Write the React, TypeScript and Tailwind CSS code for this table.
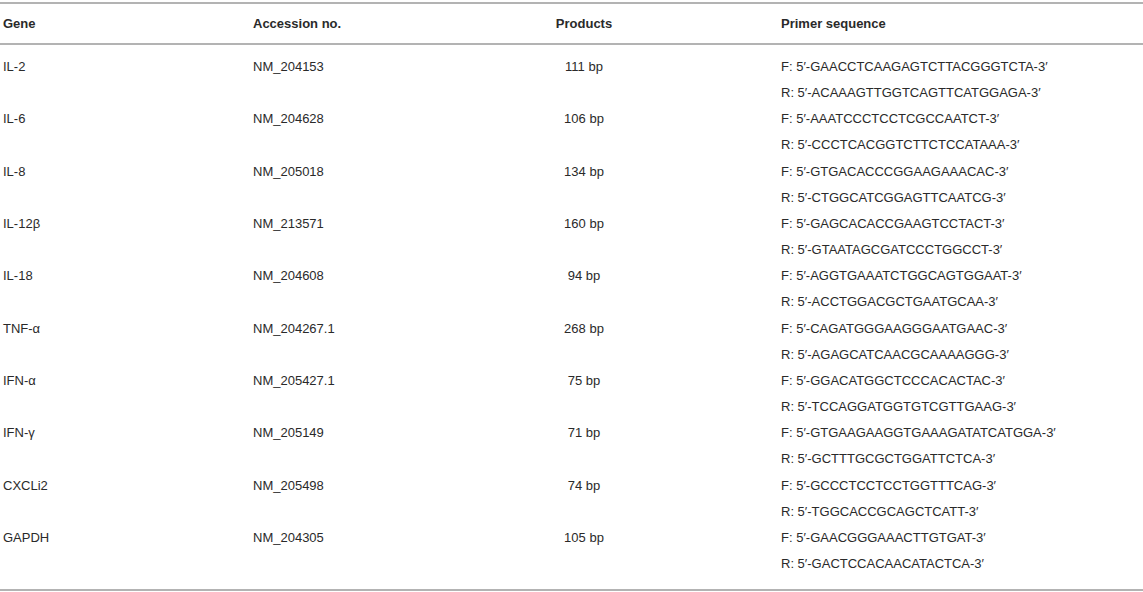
import React from "react";

type Row = {
  gene: string;
  acc: string;
  prod: string;
  f: string;
  r: string;
};

const rows: Row[] = [
  { gene: "IL-2", acc: "NM_204153", prod: "111 bp", f: "GAACCTCAAGAGTCTTACGGGTCTA", r: "ACAAAGTTGGTCAGTTCATGGAGA" },
  { gene: "IL-6", acc: "NM_204628", prod: "106 bp", f: "AAATCCCTCCTCGCCAATCT", r: "CCCTCACGGTCTTCTCCATAAA" },
  { gene: "IL-8", acc: "NM_205018", prod: "134 bp", f: "GTGACACCCGGAAGAAACAC", r: "CTGGCATCGGAGTTCAATCG" },
  { gene: "IL-12β", acc: "NM_213571", prod: "160 bp", f: "GAGCACACCGAAGTCCTACT", r: "GTAATAGCGATCCCTGGCCT" },
  { gene: "IL-18", acc: "NM_204608", prod: "94 bp", f: "AGGTGAAATCTGGCAGTGGAAT", r: "ACCTGGACGCTGAATGCAA" },
  { gene: "TNF-α", acc: "NM_204267.1", prod: "268 bp", f: "CAGATGGGAAGGGAATGAAC", r: "AGAGCATCAACGCAAAAGGG" },
  { gene: "IFN-α", acc: "NM_205427.1", prod: "75 bp", f: "GGACATGGCTCCCACACTAC", r: "TCCAGGATGGTGTCGTTGAAG" },
  { gene: "IFN-γ", acc: "NM_205149", prod: "71 bp", f: "GTGAAGAAGGTGAAAGATATCATGGA", r: "GCTTTGCGCTGGATTCTCA" },
  { gene: "CXCLi2", acc: "NM_205498", prod: "74 bp", f: "GCCCTCCTCCTGGTTTCAG", r: "TGGCACCGCAGCTCATT" },
  { gene: "GAPDH", acc: "NM_204305", prod: "105 bp", f: "GAACGGGAAACTTGTGAT", r: "GACTCCACAACATACTCA" },
];

const cols = "grid grid-cols-[250px_250px_162px_1fr]";

export default function App() {
  return (
    <div
      className="w-[1143px] h-[592px] bg-white text-[#2a2a2a] text-[13px] pt-[2px]"
      style={{ fontFamily: '"Liberation Sans", Arial, sans-serif' }}
    >
      <div className="border-t-2 border-b-2 border-[#b3b3b3]">
        <div className={`${cols} pl-[3px] h-[39px] items-center font-bold`}>
          <div>Gene</div>
          <div>Accession no.</div>
          <div className="text-center">Products</div>
          <div className="pl-[116px]">Primer sequence</div>
        </div>
      </div>
      <div className="border-b-2 border-[#b3b3b3] pt-[9px] pb-[12px]">
        {rows.map((row) => (
          <div key={row.gene} className={`${cols} pl-[3px] leading-[26.15px]`}>
            <div>{row.gene}</div>
            <div>{row.acc}</div>
            <div className="text-center">{row.prod}</div>
            <div className="pl-[116px]">
              <div>F: 5′-{row.f}-3′</div>
              <div>R: 5′-{row.r}-3′</div>
            </div>
          </div>
        ))}
      </div>
    </div>
  );
}
